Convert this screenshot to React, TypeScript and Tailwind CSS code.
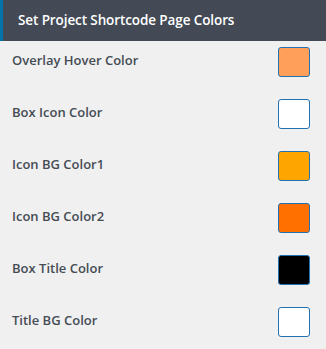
import React from "react";

const rows: { label: string; color: string }[] = [
  { label: "Overlay Hover Color", color: "#ff9f5a" },
  { label: "Box Icon Color", color: "#ffffff" },
  { label: "Icon BG Color1", color: "#ffa500" },
  { label: "Icon BG Color2", color: "#ff7000" },
  { label: "Box Title Color", color: "#000000" },
  { label: "Title BG Color", color: "#ffffff" },
];

export default function App() {
  return (
    <div
      className="w-[326px] h-[349px] bg-[#f0f0f1] overflow-hidden"
      style={{ fontFamily: '"Open Sans", "Noto Sans", sans-serif' }}
    >
      <div className="h-[41px] bg-[#434a55] border-l-[3px] border-[#0073aa] flex items-center pl-[15px]">
        <span className="text-white text-[13.5px] font-semibold tracking-[-0.1px]">
          Set Project Shortcode Page Colors
        </span>
      </div>
      <div className="flex flex-col pt-[6px]">
        {rows.map((r) => (
          <div key={r.label} className="h-[52px] flex items-start justify-between pl-[12px] pr-[16px]">
            <span className="text-[#454c54] text-[13px] font-semibold mt-[4px]">{r.label}</span>
            <div
              className="w-[32px] h-[30px] rounded-[3px] border border-[#2271b1]"
              style={{ backgroundColor: r.color }}
            />
          </div>
        ))}
      </div>
    </div>
  );
}
